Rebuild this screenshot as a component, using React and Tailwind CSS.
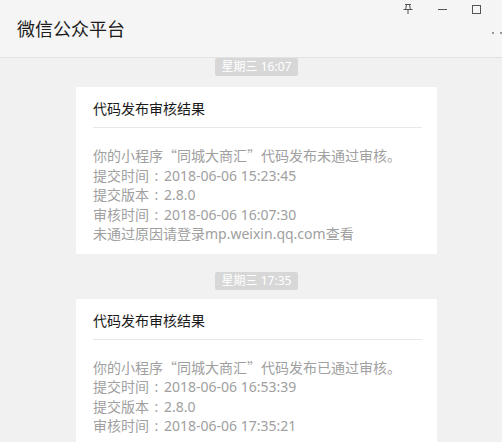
import React from 'react'

const FONT = '"Noto Sans", "Noto Sans CJK SC", "Liberation Sans", sans-serif'

const MESSAGES = [
  {
    time: '星期三 16:07',
    lines: [
      '你的小程序“同城大商汇”代码发布未通过审核。',
      '提交时间：2018-06-06 15:23:45',
      '提交版本：2.8.0',
      '审核时间：2018-06-06 16:07:30',
      '未通过原因请登录mp.weixin.qq.com查看',
    ],
  },
  {
    time: '星期三 17:35',
    lines: [
      '你的小程序“同城大商汇”代码发布已通过审核。',
      '提交时间：2018-06-06 16:53:39',
      '提交版本：2.8.0',
      '审核时间：2018-06-06 17:35:21',
    ],
  },
]

function PinIcon() {
  return (
    <svg width="10" height="10" viewBox="0 0 10 10" fill="none" stroke="#555" strokeWidth="1">
      <path d="M2 0.5H8" />
      <path d="M3.5 0.5L2.7 5" />
      <path d="M6.5 0.5L7.3 5" />
      <path d="M0.5 5.5H9.5" />
      <path d="M5 5.5V10" />
    </svg>
  )
}

// full-width colon centred in its cell and wide CJK quotes, like the desktop client
function Line({ text }) {
  const parts = text.split(/([“”：])/)
  return (
    <p className="whitespace-nowrap">
      {parts.map((p, i) => {
        if (p === '：') return <span key={i} className="inline-block w-[15px] text-center">:</span>
        if (p === '“' || p === '”')
          return <span key={i} className="font-['Noto_Sans_CJK_SC']">{p}</span>
        return p
      })}
    </p>
  )
}

function Card({ lines }) {
  return (
    <div className="bg-white pt-[11px] pb-[10px] pl-[17px] pr-[15px]">
      <p className="text-[14px] leading-[22px] text-[#1a1a1a]">代码发布审核结果</p>
      <div className="mt-[7px] h-px bg-[#e8e8e8]" />
      <div className="mt-[18px] text-[14px] leading-[19.5px] text-[#a0a0a0]">
        {lines.map((l, i) => (
          <Line key={i} text={l} />
        ))}
      </div>
    </div>
  )
}

export default function App() {
  return (
    <div className="w-[502px] h-[442px] overflow-hidden bg-[#f1f1f1]" style={{ fontFamily: FONT }}>
      {/* title bar */}
      <div className="h-[58px] bg-[#f5f5f5] border-b border-[#e2e2e2]">
        <div className="flex justify-end items-center gap-[25px] pt-[4px] pr-[21px] h-[14px]">
          <PinIcon />
          <div className="w-[9px] h-px bg-[#555]" />
          <div className="w-[9px] h-[9px] border border-[#555]" />
        </div>
        <div className="flex items-center justify-between mt-[3px] pl-[17px]">
          <h1 className="text-[18px] leading-[24px] text-[#1b1b1b] font-normal">微信公众平台</h1>
          <div className="flex gap-[6px] mr-[-8px] pt-[7px]">
            <span className="w-[2px] h-[2px] rounded-full bg-[#777]" />
            <span className="w-[2px] h-[2px] rounded-full bg-[#777]" />
            <span className="w-[2px] h-[2px] rounded-full bg-[#777]" />
          </div>
        </div>
      </div>

      {/* messages */}
      <div className="ml-[76px] w-[361px] flex flex-col">
        {MESSAGES.map((m, i) => (
          <div key={i} className="flex flex-col">
            <div className={`flex justify-center ${i === 0 ? 'mt-0' : 'mt-[18px]'}`}>
              <span className="h-[18px] px-[7px] bg-[#d7d7d7] text-white text-[12px] leading-[18px] rounded-[2px] whitespace-nowrap">
                {m.time}
              </span>
            </div>
            <div className={i === 0 ? 'mt-[11px]' : 'mt-[9px]'}>
              <Card lines={m.lines} />
            </div>
          </div>
        ))}
      </div>
    </div>
  )
}
